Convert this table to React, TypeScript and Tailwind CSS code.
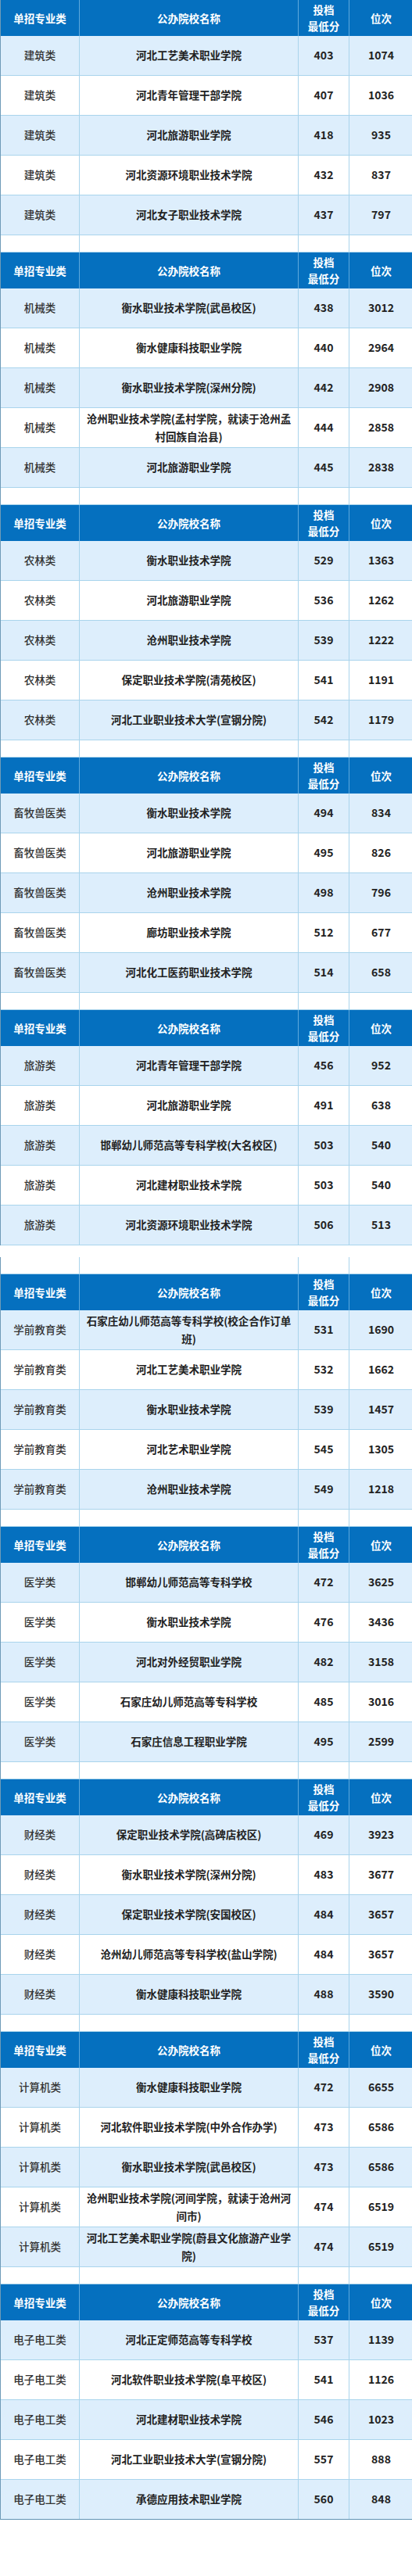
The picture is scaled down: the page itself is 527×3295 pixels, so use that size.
type Row = [string, number, number]

type Section = { major: string; rows: Row[] }

const tableOne: Section[] = [
    {
        major: "建筑类",
        rows: [
            ["河北工艺美术职业学院", 403, 1074],
            ["河北青年管理干部学院", 407, 1036],
            ["河北旅游职业学院", 418, 935],
            ["河北资源环境职业技术学院", 432, 837],
            ["河北女子职业技术学院", 437, 797],
        ],
    },
    {
        major: "机械类",
        rows: [
            ["衡水职业技术学院(武邑校区)", 438, 3012],
            ["衡水健康科技职业学院", 440, 2964],
            ["衡水职业技术学院(深州分院)", 442, 2908],
            ["沧州职业技术学院(孟村学院，就读于沧州孟村回族自治县)", 444, 2858],
            ["河北旅游职业学院", 445, 2838],
        ],
    },
    {
        major: "农林类",
        rows: [
            ["衡水职业技术学院", 529, 1363],
            ["河北旅游职业学院", 536, 1262],
            ["沧州职业技术学院", 539, 1222],
            ["保定职业技术学院(清苑校区)", 541, 1191],
            ["河北工业职业技术大学(宣钢分院)", 542, 1179],
        ],
    },
    {
        major: "畜牧兽医类",
        rows: [
            ["衡水职业技术学院", 494, 834],
            ["河北旅游职业学院", 495, 826],
            ["沧州职业技术学院", 498, 796],
            ["廊坊职业技术学院", 512, 677],
            ["河北化工医药职业技术学院", 514, 658],
        ],
    },
    {
        major: "旅游类",
        rows: [
            ["河北青年管理干部学院", 456, 952],
            ["河北旅游职业学院", 491, 638],
            ["邯郸幼儿师范高等专科学校(大名校区)", 503, 540],
            ["河北建材职业技术学院", 503, 540],
            ["河北资源环境职业技术学院", 506, 513],
        ],
    },
]

const tableTwo: Section[] = [
    {
        major: "学前教育类",
        rows: [
            ["石家庄幼儿师范高等专科学校(校企合作订单班)", 531, 1690],
            ["河北工艺美术职业学院", 532, 1662],
            ["衡水职业技术学院", 539, 1457],
            ["河北艺术职业学院", 545, 1305],
            ["沧州职业技术学院", 549, 1218],
        ],
    },
    {
        major: "医学类",
        rows: [
            ["邯郸幼儿师范高等专科学校", 472, 3625],
            ["衡水职业技术学院", 476, 3436],
            ["河北对外经贸职业学院", 482, 3158],
            ["石家庄幼儿师范高等专科学校", 485, 3016],
            ["石家庄信息工程职业学院", 495, 2599],
        ],
    },
    {
        major: "财经类",
        rows: [
            ["保定职业技术学院(高碑店校区)", 469, 3923],
            ["衡水职业技术学院(深州分院)", 483, 3677],
            ["保定职业技术学院(安国校区)", 484, 3657],
            ["沧州幼儿师范高等专科学校(盐山学院)", 484, 3657],
            ["衡水健康科技职业学院", 488, 3590],
        ],
    },
    {
        major: "计算机类",
        rows: [
            ["衡水健康科技职业学院", 472, 6655],
            ["河北软件职业技术学院(中外合作办学)", 473, 6586],
            ["衡水职业技术学院(武邑校区)", 473, 6586],
            ["沧州职业技术学院(河间学院，就读于沧州河间市)", 474, 6519],
            ["河北工艺美术职业学院(蔚县文化旅游产业学院)", 474, 6519],
        ],
    },
    {
        major: "电子电工类",
        rows: [
            ["河北正定师范高等专科学校", 537, 1139],
            ["河北软件职业技术学院(阜平校区)", 541, 1126],
            ["河北建材职业技术学院", 546, 1023],
            ["河北工业职业技术大学(宣钢分院)", 557, 888],
            ["承德应用技术职业学院", 560, 848],
        ],
    },
]

const cols = "grid grid-cols-[101px_280px_65px_81px]"

const HeaderRow = () => (
    <div className={`${cols} h-[45.5px] bg-[#0570bf] text-white font-bold text-[13.5px]`}>
        <div className="flex items-center justify-center border-r border-[#5fa9dc]">
            单招专业类
        </div>
        <div className="flex items-center justify-center border-r border-[#5fa9dc]">
            公办院校名称
        </div>
        <div className="flex flex-col items-center justify-center leading-[21px] border-r border-[#5fa9dc]">
            <span>投档</span>
            <span>最低分</span>
        </div>
        <div className="flex items-center justify-center">位次</div>
    </div>
)

const Spacer = () => (
    <div className={`${cols} h-[22.5px] bg-white border-b border-[#a9d4ec]`}>
        <div className="border-r border-[#a9d4ec]" />
        <div className="border-r border-[#a9d4ec]" />
        <div className="border-r border-[#a9d4ec]" />
        <div />
    </div>
)

const DataRow = ({
    major,
    row,
    shaded,
    closing = false,
}: {
    major: string
    row: Row
    shaded: boolean
    closing?: boolean
}) => {
    const [name, score, rank] = row
    return (
        <div
            className={`${cols} h-[51px] border-b ${
                closing ? "border-[#5f93b3]" : "border-[#a9d4ec]"
            } ${shaded ? "bg-[#ddeefc]" : "bg-white"}`}
        >
            <div className="flex items-center justify-center border-r border-[#a9d4ec] text-[13.5px] text-[#333] font-medium">
                {major}
            </div>
            <div className="flex items-center justify-center border-r border-[#a9d4ec] px-[6px] text-center text-[13.5px] leading-[23px] font-bold text-[#222]">
                {name}
            </div>
            <div className="flex items-center justify-center border-r border-[#a9d4ec] text-[14px] font-bold text-[#222]">
                {score}
            </div>
            <div className="flex items-center justify-center text-[14px] font-bold text-[#222]">
                {rank}
            </div>
        </div>
    )
}

const Table = ({
    sections,
    leadSpacer,
    closed,
}: {
    sections: Section[]
    leadSpacer?: boolean
    closed?: boolean
}) => (
    <div className="border-l border-[#6f9bb8]">
        {leadSpacer && <Spacer />}
        {sections.map((section, i) => {
            const last = i === sections.length - 1
            return (
                <div key={section.major}>
                    <HeaderRow />
                    {section.rows.map((row, j) => (
                        <DataRow
                            key={j}
                            major={section.major}
                            row={row}
                            shaded={j % 2 === 0}
                            closing={closed && last && j === section.rows.length - 1}
                        />
                    ))}
                    {!last && <Spacer />}
                </div>
            )
        })}
    </div>
)

export default function App() {
    return (
        <div
            className="w-[527px] h-[3295px] bg-white overflow-hidden"
            style={{ fontFamily: '"Noto Sans CJK SC", "Noto Sans", sans-serif' }}
        >
            <Table sections={tableOne} />
            <div className="h-[15px]" />
            <Table sections={tableTwo} leadSpacer closed />
        </div>
    )
}
